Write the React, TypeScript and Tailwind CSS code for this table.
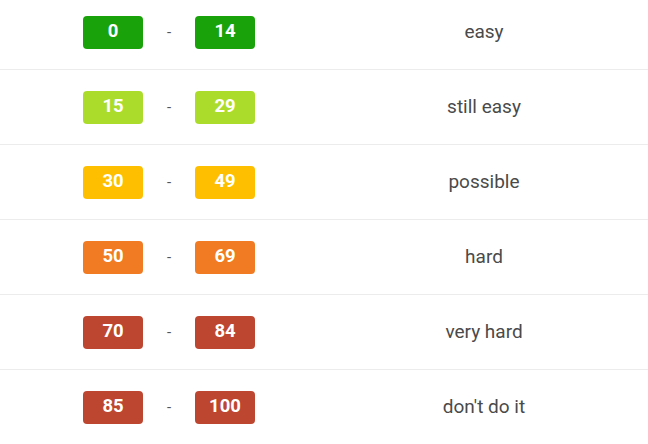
import React from "react";

const rows = [
  { a: "0", b: "14", c: "bg-[#19a20a]", t: "easy" },
  { a: "15", b: "29", c: "bg-[#acdc2b]", t: "still easy" },
  { a: "30", b: "49", c: "bg-[#fdbf00]", t: "possible" },
  { a: "50", b: "69", c: "bg-[#f07b22]", t: "hard" },
  { a: "70", b: "84", c: "bg-[#bd4630]", t: "very hard" },
  { a: "85", b: "100", c: "bg-[#bd4630]", t: "don't do it" },
];

export default function App() {
  return (
    <div className="w-[648px] h-[444px] overflow-hidden bg-white" style={{ fontFamily: "Roboto, sans-serif" }}>
      <div className="-mt-[5px]">
        {rows.map((r, i) => (
          <div key={i} className="flex items-center h-[75px] border-b border-[#ececec]">
            <div className="w-[320px] flex items-center pl-[83px]">
              <span className={`w-[60px] h-[33px] rounded-[4px] ${r.c} text-white font-bold text-[18.5px] flex items-center justify-center`}>{r.a}</span>
              <span className="w-[52px] text-center text-[#555] text-[15px]">-</span>
              <span className={`w-[60px] h-[33px] rounded-[4px] ${r.c} text-white font-bold text-[18.5px] flex items-center justify-center`}>{r.b}</span>
            </div>
            <div className="flex-1 text-center text-[#4a4a4a] text-[19px]">{r.t}</div>
          </div>
        ))}
      </div>
    </div>
  );
}
